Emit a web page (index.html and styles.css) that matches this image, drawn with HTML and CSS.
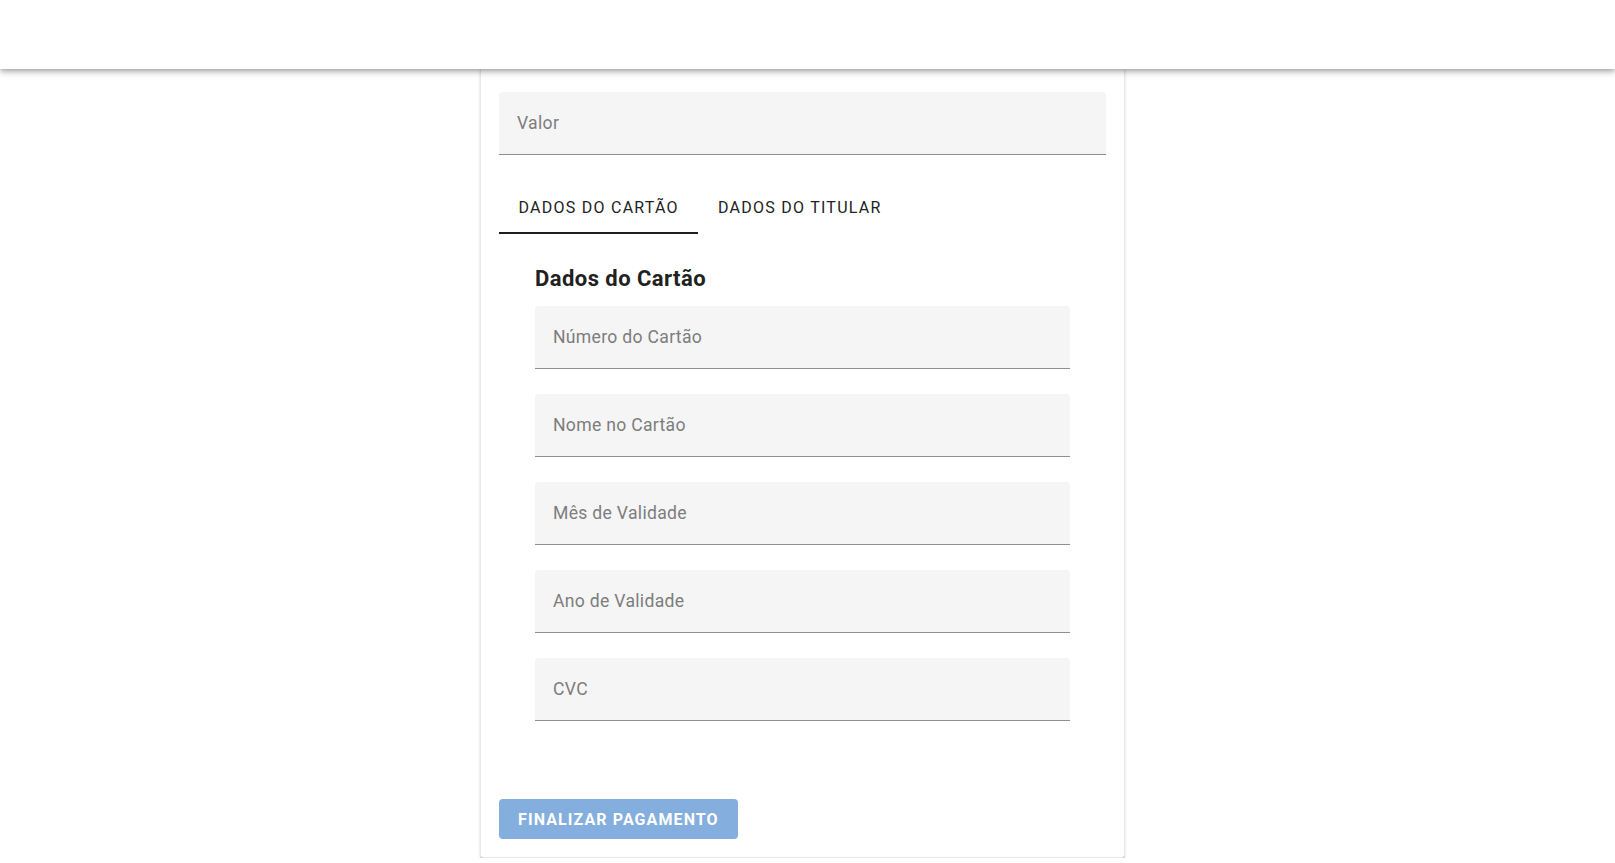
FILE: index.html
```html
<!DOCTYPE html>
<html lang="pt-BR">
<head>
<meta charset="utf-8">
<title>Pagamento</title>
<link rel="stylesheet" href="styles.css">
</head>
<body>
<header class="topbar"></header>
<main class="page">
  <section class="card">
    <div class="field field-wide"><span class="placeholder">Valor</span></div>
    <nav class="tabs">
      <div class="tab tab-active">DADOS DO CARTÃO</div>
      <div class="tab">DADOS DO TITULAR</div>
    </nav>
    <div class="tab-body">
      <h3 class="section-title">Dados do Cartão</h3>
      <div class="field"><span class="placeholder">Número do Cartão</span></div>
      <div class="field"><span class="placeholder">Nome no Cartão</span></div>
      <div class="field"><span class="placeholder">Mês de Validade</span></div>
      <div class="field"><span class="placeholder">Ano de Validade</span></div>
      <div class="field"><span class="placeholder">CVC</span></div>
    </div>
    <button class="submit" type="button">FINALIZAR PAGAMENTO</button>
  </section>
</main>
</body>
</html>
```

FILE: styles.css
```css
html, body {
  margin: 0;
  padding: 0;
  background: #ffffff;
  font-family: Roboto, "Liberation Sans", Arial, sans-serif;
  overflow: hidden;
}

.topbar {
  position: relative;
  z-index: 2;
  height: 69px;
  background: #ffffff;
  box-shadow: 0 2px 4px -1px rgba(0,0,0,.2), 0 4px 5px 0 rgba(0,0,0,.14), 0 1px 10px 0 rgba(0,0,0,.12);
}

.page {
  display: flex;
  justify-content: center;
  padding-right: 10px;
}

.card {
  box-sizing: border-box;
  width: 645px;
  padding: 23px 18px 18px;
  background: #ffffff;
  border: 1px solid #e9e9e9;
  border-top: none;
  border-radius: 0 0 4px 4px;
  box-shadow: 0 2px 1px -1px rgba(0,0,0,.2), 0 1px 1px 0 rgba(0,0,0,.14), 0 1px 3px 0 rgba(0,0,0,.12);
}

.field {
  box-sizing: border-box;
  height: 63px;
  display: flex;
  align-items: center;
  padding: 0 18px;
  background: #f5f5f5;
  border-bottom: 1px solid #8f8f8f;
  border-radius: 4px 4px 0 0;
  margin-bottom: 25px;
}

.field-wide {
  margin-bottom: 26px;
}

.placeholder {
  font-size: 17.6px;
  letter-spacing: 0.3px;
  color: #7d7d7d;
}

.tabs {
  display: flex;
  height: 53px;
}

.tab {
  box-sizing: border-box;
  height: 53px;
  padding: 0 20px;
  display: flex;
  align-items: center;
  white-space: nowrap;
  font-size: 16px;
  font-weight: 400;
  letter-spacing: 1.25px;
  color: #222222;
}

.tab-active {
  width: 199px;
  padding: 2px 0 0 19.5px;
  border-bottom: 2px solid #1f1f1f;
}

.tab-body {
  padding: 27px 36px 34px;
}

.section-title {
  margin: 0 0 10px;
  font-size: 22px;
  line-height: 35.2px;
  font-weight: 700;
  letter-spacing: 0.45px;
  color: #212121;
}

.submit {
  display: block;
  margin-top: 19px;
  height: 40px;
  padding: 0 19px;
  border: none;
  border-radius: 4px;
  background: #84aedd;
  color: #ffffff;
  font-family: Roboto, "Liberation Sans", Arial, sans-serif;
  font-size: 16px;
  font-weight: 700;
  letter-spacing: 1.1px;
}
```
